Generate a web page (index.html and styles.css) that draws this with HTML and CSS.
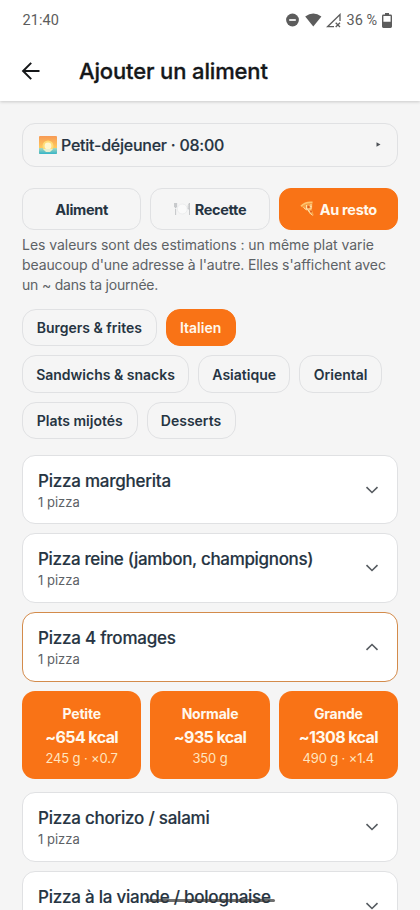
FILE: index.html
```html
<!DOCTYPE html>
<html lang="fr">
<head>
<meta charset="utf-8">
<meta name="viewport" content="width=device-width, initial-scale=1">
<title>Ajouter un aliment</title>
<link rel="stylesheet" href="styles.css">
</head>
<body>
<div class="screen">
  <header class="top">
    <div class="status">
      <span class="clock">21:40</span>
      <svg class="dnd" width="13" height="14" viewBox="0 0 13 14"><circle cx="6.500" cy="7" r="6.400" fill="#5c5c5c"/><path d="M3.200 7h6.600" stroke="#fff" stroke-width="1.700"/></svg>
      <svg class="wifi" width="17" height="14" viewBox="0 0 17 14"><path d="M.2 3.600Q8.300-2.400 16.400 3.600L8.300 13.500Z" fill="#5c5c5c"/></svg>
      <svg class="signal" width="16" height="15" viewBox="0 0 16 15"><path d="M8 13.700H1.500L14 1.500V8" fill="none" stroke="#5c5c5c" stroke-width="1.300"/><path d="M9.700 9.700l4.300 4.300M14 9.700l-4.300 4.300" stroke="#5c5c5c" stroke-width="1.300"/></svg>
      <span class="charge">36 %</span>
      <svg class="battery" width="10" height="15" viewBox="0 0 10 15"><path d="M3 0h4v1.500h1.600q1.400 0 1.400 1.400v10.700q0 1.400-1.400 1.400H1.400Q0 15 0 13.600V2.900Q0 1.500 1.400 1.500H3ZM1.400 3v5.800h7.200V3Z" fill="#5c5c5c" fill-rule="evenodd"/></svg>
    </div>
    <div class="bar">
      <svg class="back" width="20" height="20" viewBox="0 0 20 20"><path d="M18.500 10H2.500M10.200 1.900L2.100 10l8.100 8.100" fill="none" stroke="#151719" stroke-width="2"/></svg>
      <h1 class="title">Ajouter un aliment</h1>
    </div>
  </header>

  <main class="content">
    <button class="select">
      <svg class="sunrise" width="18" height="18" viewBox="0 0 18 18">
        <defs>
          <linearGradient id="sky" x1="0" y1="0" x2="0" y2="1"><stop offset="0" stop-color="#f79a55"/><stop offset=".65" stop-color="#ffc95c"/></linearGradient>
          <linearGradient id="sea" x1="0" y1="0" x2="0" y2="1"><stop offset="0" stop-color="#a9d8c0"/><stop offset="1" stop-color="#35b5c8"/></linearGradient>
        </defs>
        <rect width="18" height="18" rx="1" fill="url(#sky)"/>
        <path d="M0 12h18v5q0 1-1 1H1q-1 0-1-1Z" fill="url(#sea)"/>
        <circle cx="9" cy="10" r="5.500" fill="#ffdc78"/>
        <circle cx="9" cy="10" r="3.400" fill="#fff6cf"/>
        <path d="M4 13h10l-3 3H7Z" fill="#e9efcf"/>
      </svg>
      <span class="select-label">Petit-déjeuner · 08:00</span>
      <svg class="caret" width="5" height="5" viewBox="0 0 5 5"><path d="M.5.300L4.500 2.500.5 4.700Z" fill="#4e5257"/></svg>
    </button>

    <nav class="tabs">
      <button class="tab">Aliment</button>
      <button class="tab">
        <svg class="tab-icon plate" width="17" height="14" viewBox="0 0 17 14"><circle cx="8.300" cy="7" r="5" fill="#fafafa" stroke="#e9eaeb" stroke-width=".8"/><path d="M1.600 7v6M.6 1v4q1 1.500 2 0V1M1.600 1v5M15.500 13V1q-1.800 2-1.300 6h1.300" fill="none" stroke="#bfc2c4" stroke-width=".9"/></svg>
        <span>Recette</span>
      </button>
      <button class="tab tab-on">
        <svg class="tab-icon pizza" width="15" height="16" viewBox="0 0 15 16"><path d="M1 5.500Q5 1 12.500 1.500L12 9 14 14.500 9.500 13 8 9.500Z" fill="#f8a044"/><path d="M1 5.200Q5 .7 12.500 1.300" fill="none" stroke="#ffc56f" stroke-width="1.700"/><path d="M3.500 6.500l3 2.500M6.500 4v4l4 3M11 3v5h-5M8.500 10l4 4.500M9.500 5l2.500 1" fill="none" stroke="#ffe1ab" stroke-width="1"/><circle cx="8.500" cy="6" r="1.200" fill="#df5a1d"/><circle cx="11" cy="10.500" r="1" fill="#df5a1d"/></svg>
        <span>Au resto</span>
      </button>
    </nav>

    <p class="note">Les valeurs sont des estimations : un même plat varie<br><span class="note-mid">beaucoup d'une adresse à l'autre. Elles s'affichent avec</span><br><span class="note-end">un ~ dans ta journée.</span></p>

    <div class="chips">
      <div class="chip-row"><button class="chip c1">Burgers &amp; frites</button><button class="chip chip-on c2">Italien</button></div>
      <div class="chip-row"><button class="chip c3">Sandwichs &amp; snacks</button><button class="chip c4">Asiatique</button><button class="chip c5">Oriental</button></div>
      <div class="chip-row"><button class="chip c6">Plats mijotés</button><button class="chip c7">Desserts</button></div>
    </div>

    <section class="list">
      <article class="card">
        <div class="info"><h2 class="name">Pizza margherita</h2><p class="unit">1 pizza</p></div>
        <svg class="chevron" width="14" height="8" viewBox="0 0 14 8"><path d="M1.500 1.200L7 6.500l5.500-5.300"/></svg>
      </article>
      <article class="card">
        <div class="info"><h2 class="name name-long">Pizza reine (jambon, champignons)</h2><p class="unit">1 pizza</p></div>
        <svg class="chevron" width="14" height="8" viewBox="0 0 14 8"><path d="M1.500 1.200L7 6.500l5.500-5.300"/></svg>
      </article>
      <article class="card card-open">
        <div class="info"><h2 class="name">Pizza 4 fromages</h2><p class="unit">1 pizza</p></div>
        <svg class="chevron" width="14" height="8" viewBox="0 0 14 8"><path d="M1.500 6.800L7 1.500l5.500 5.300"/></svg>
      </article>
      <div class="portions">
        <button class="portion"><span class="size">Petite</span><span class="kcal">~654 kcal</span><span class="grams">245 g · ×0.7</span></button>
        <button class="portion"><span class="size">Normale</span><span class="kcal">~935 kcal</span><span class="grams">350 g</span></button>
        <button class="portion"><span class="size">Grande</span><span class="kcal">~1308 kcal</span><span class="grams">490 g · ×1.4</span></button>
      </div>
      <article class="card">
        <div class="info"><h2 class="name">Pizza chorizo / salami</h2><p class="unit">1 pizza</p></div>
        <svg class="chevron" width="14" height="8" viewBox="0 0 14 8"><path d="M1.500 1.200L7 6.500l5.500-5.300"/></svg>
      </article>
      <article class="card">
        <div class="info"><h2 class="name">Pizza à la viande / bolognaise</h2></div>
        <svg class="chevron" width="14" height="8" viewBox="0 0 14 8"><path d="M1.500 1.200L7 6.500l5.500-5.300"/></svg>
      </article>
    </section>
  </main>
  <div class="home-indicator"></div>
</div>
</body>
</html>
```
FILE: styles.css
```css
* { box-sizing: border-box; }
body { margin: 0; background: #f5f5f5; font-family: Inter, "Liberation Sans", sans-serif; color: #263442; }
h1, h2, p { margin: 0; }
button { font: inherit; color: inherit; padding: 0; background: none; border: 0; }
svg { display: block; flex: none; }
.screen { position: relative; height: 910px; overflow: hidden; }

.top { height: 101px; background: #fff; box-shadow: 0 1px 3px rgba(0, 0, 0, .18); }
.status { display: flex; align-items: center; height: 40px; padding: 0 28px 0 22.500px; font-family: Roboto, sans-serif; font-size: 14.5px; color: #5c5c5c; }
.clock { margin-right: auto; letter-spacing: .1px; }
.wifi { margin-left: 6px; }
.signal { margin-left: 4px; }
.charge { margin-left: 4px; }
.battery { margin-left: 5px; }
.bar { display: flex; align-items: center; height: 61px; padding-left: 21px; }
.title { margin-left: 38px; font-size: 22px; font-weight: 500; letter-spacing: -.14px; color: #151719; white-space: nowrap; -webkit-text-stroke: .3px #151719; }

.content { padding: 22px 22px 0; }
.select { display: flex; align-items: center; width: 100%; height: 43.500px; padding: 0 16px; border: 1px solid #e0e1e3; border-radius: 13px; }
.select-label { margin-left: 4px; font-size: 16px; font-weight: 500; letter-spacing: -.24px; -webkit-text-stroke: .15px #263442; }
.caret { margin-left: auto; }

.tabs { display: grid; grid-template-columns: repeat(3, 1fr); gap: 9px; margin-top: 21.500px; }
.tab { display: flex; align-items: center; justify-content: center; height: 42px; border: 1px solid #e0e1e3; border-radius: 12px; font-size: 14.500px; font-weight: 700; letter-spacing: -.33px; }
.tab-icon { margin-right: 4px; }
.pizza { margin-right: 5px; }
.tab-on, .chip-on { background: #f97316; border-color: #f97316; color: #fff8ed; }

.note { margin-top: 5px; font-size: 14px; line-height: 20px; letter-spacing: -.04px; color: #5d6266; white-space: nowrap; }
.note-mid { letter-spacing: -.1px; }
.note-end { letter-spacing: -.2px; }

.chips { display: grid; gap: 9px; margin-top: 14px; }
.chip-row { display: flex; gap: 9px; }
.chip { height: 37.400px; border: 1px solid #e0e1e3; border-radius: 14px; font-size: 14px; font-weight: 600; white-space: nowrap; }
.chip-on { border-color: #f97316; }
.c1 { width: 134.600px; }
.c2 { width: 70px; }
.c3 { width: 167px; }
.c4 { width: 92.300px; }
.c5 { width: 82.800px; }
.c6 { width: 115.500px; }
.c7 { width: 89px; }

.list { margin-top: 15.500px; }
.card { display: flex; align-items: center; justify-content: space-between; height: 69.800px; margin-bottom: 9px; padding: 0 18px 0 15px; background: #fff; border: 1px solid #e0e1e3; border-radius: 13px; }
.card-open { border-color: #d38b4b; }
.info { height: 42px; }
.name { font-size: 17px; line-height: 24px; font-weight: 500; letter-spacing: -.24px; white-space: nowrap; -webkit-text-stroke: .15px #263442; }
.name-long { letter-spacing: -.33px; }
.unit { font-size: 13px; line-height: 19px; color: #5d6266; }
.chevron path { fill: none; stroke: #565b60; stroke-width: 1.600; }
.portions { display: grid; grid-template-columns: repeat(3, 1fr); gap: 9px; margin-bottom: 13px; }
.portion { display: flex; flex-direction: column; align-items: center; height: 88px; padding-top: 12px; border-radius: 13px; background: #f97316; color: #fff8ed; white-space: nowrap; }
.size { font-size: 14px; line-height: 22px; font-weight: 700; letter-spacing: -.2px; }
.kcal { font-size: 16px; line-height: 24px; font-weight: 700; letter-spacing: -.6px; }
.grams { font-size: 13px; line-height: 18px; letter-spacing: -.15px; color: #ffe5bf; }

.home-indicator { position: absolute; left: 145px; top: 899px; width: 130px; height: 3px; border-radius: 2px; background: rgba(55, 55, 55, .72); }
```
